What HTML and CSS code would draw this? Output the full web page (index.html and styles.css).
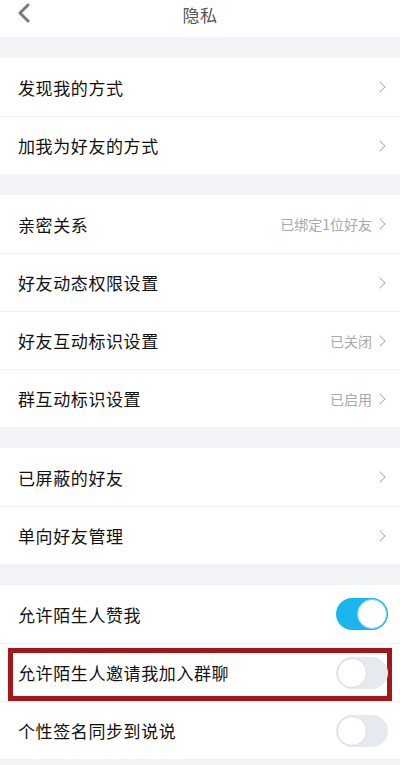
FILE: index.html
```html
<!DOCTYPE html>
<html lang="zh-CN">
<head>
    <meta charset="UTF-8">
    <meta name="viewport" content="width=device-width, initial-scale=1.0">
    <title>隐私</title>
    <link rel="stylesheet" href="styles.css">
</head>
<body>
    <header class="topbar">
        <svg class="back" width="14" height="20" viewBox="0 0 14 20">
            <path d="M11 2 L3 10 L11 18" fill="none" stroke="#7a7a7a" stroke-width="3" stroke-linecap="round" stroke-linejoin="round"/>
        </svg>
        <span class="title">隐私</span>
    </header>

    <section class="group">
        <div class="row"><span class="label">发现我的方式</span><span class="arrow"></span></div>
        <div class="row"><span class="label">加我为好友的方式</span><span class="arrow"></span></div>
    </section>

    <section class="group">
        <div class="row"><span class="label">亲密关系</span><span class="value">已绑定1位好友</span><span class="arrow"></span></div>
        <div class="row"><span class="label">好友动态权限设置</span><span class="arrow"></span></div>
        <div class="row"><span class="label">好友互动标识设置</span><span class="value">已关闭</span><span class="arrow"></span></div>
        <div class="row"><span class="label">群互动标识设置</span><span class="value">已启用</span><span class="arrow"></span></div>
    </section>

    <section class="group">
        <div class="row"><span class="label">已屏蔽的好友</span><span class="arrow"></span></div>
        <div class="row"><span class="label">单向好友管理</span><span class="arrow"></span></div>
    </section>

    <section class="group">
        <div class="row"><span class="label">允许陌生人赞我</span><span class="switch on"></span></div>
        <div class="row marked"><span class="label">允许陌生人邀请我加入群聊</span><span class="switch"></span></div>
        <div class="row"><span class="label">个性签名同步到说说</span><span class="switch"></span></div>
    </section>
</body>
</html>
```

FILE: styles.css
```css
body {
    margin: 0;
    background-color: #f2f3f7;
    font-family: "Noto Sans CJK SC", "Noto Sans", sans-serif;
    color: #111;
}
.topbar {
    position: relative;
    height: 37px;
    background-color: #fff;
    display: flex;
    align-items: center;
    justify-content: center;
}
.back {
    position: absolute;
    left: 17px;
    top: 3px;
}
.title {
    font-size: 17px;
    color: #555;
    margin-top: -8px;
    letter-spacing: 0.5px;
}
.group {
    background-color: #fff;
    margin-top: 21px;
}
.row {
    position: relative;
    height: 58px;
    display: flex;
    align-items: center;
    padding: 0 12px 0 18px;
    border-top: 1px solid #f1f1f3;
    box-sizing: border-box;
}
.row:first-child {
    border-top: none;
}
.label {
    flex: 1;
    font-size: 17px;
    letter-spacing: 0.6px;
}
.value {
    font-size: 14px;
    color: #a9a9a9;
    margin-right: 4px;
}
.arrow {
    width: 7px;
    height: 7px;
    border-top: 1.5px solid #b5b5b5;
    border-right: 1.5px solid #b5b5b5;
    transform: rotate(45deg);
    margin-right: 4px;
}
.switch {
    position: relative;
    width: 52px;
    height: 32px;
    border-radius: 16px;
    background-color: #e7e9f1;
    box-sizing: border-box;
}
.switch::after {
    content: "";
    position: absolute;
    left: 1px;
    top: 1px;
    width: 30px;
    height: 30px;
    border-radius: 50%;
    background-color: #fff;
    border: 1px solid #dcdde2;
    box-sizing: border-box;
}
.switch.on {
    background-color: #1bb4ec;
}
.switch.on::after {
    left: 21px;
    border-color: #7fd3f2;
}
.marked::before {
    content: "";
    position: absolute;
    left: 8px;
    right: 8px;
    top: 4px;
    bottom: 0;
    border: 5px solid #a3161a;
}
```
